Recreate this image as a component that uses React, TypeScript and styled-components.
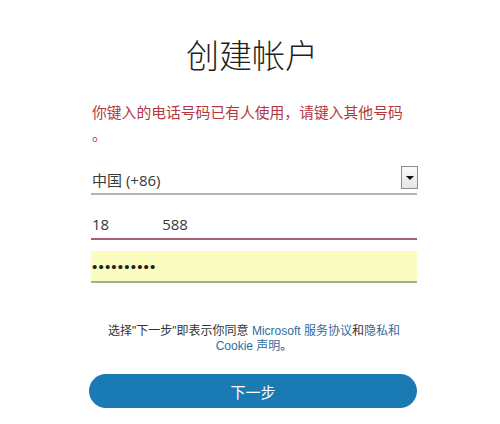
import React from "react";
import styled, { createGlobalStyle } from "styled-components";

const Global = createGlobalStyle`
  html, body { margin: 0; padding: 0; background: #ffffff; }
  body { font-family: "Open Sans", "Noto Sans CJK SC", sans-serif; }
  * { box-sizing: border-box; }
`;

const Page = styled.div`
  width: 500px;
  height: 424px;
  overflow: hidden;
  background: #fff;
`;

const Column = styled.main`
  width: 326px;
  margin-left: 91px;
  padding-top: 34px;
  display: flex;
  flex-direction: column;
`;

const Title = styled.h1`
  margin: 0 0 0 -4px;
  text-align: center;
  font-family: "Noto Sans CJK SC", sans-serif;
  font-weight: 300;
  font-size: 33px;
  line-height: 40px;
  color: #1e1e1e;
`;

const ErrorText = styled.p`
  margin: 27px 0 0 0;
  padding-left: 1px;
  font-family: "Noto Sans CJK SC", sans-serif;
  font-size: 14.8px;
  line-height: 22px;
  color: #b5373f;
  line-break: anywhere;
`;

const Field = styled.div<{ $border: string; $bg?: string; $mt: number; $h: number }>`
  margin-top: ${(p) => p.$mt}px;
  height: ${(p) => p.$h}px;
  display: flex;
  align-items: center;
  justify-content: space-between;
  padding-left: 1px;
  background: ${(p) => p.$bg || "transparent"};
  border-bottom: 2px solid ${(p) => p.$border};
`;

const FieldText = styled.span`
  font-family: "Open Sans", "Noto Sans CJK SC", sans-serif;
  font-size: 15px;
  color: #3a3a3a;
`;

const Gap = styled.span<{ $w: number }>`
  display: inline-block;
  width: ${(p) => p.$w}px;
`;

const DropButton = styled.span`
  width: 17px;
  height: 23px;
  margin-top: -3px;
  margin-right: -1px;
  border: 1px solid #8e8e8e;
  background: linear-gradient(#fafafa, #e6e6e6);
  display: flex;
  align-items: center;
  justify-content: center;
`;

const Triangle = styled.span`
  width: 0;
  height: 0;
  border-left: 4px solid transparent;
  border-right: 4px solid transparent;
  border-top: 4px solid #111;
`;

const Dots = styled.span`
  font-family: "Liberation Sans", sans-serif;
  font-size: 15px;
  letter-spacing: 1.2px;
  color: #222;
`;

const Terms = styled.p`
  margin: 41px 0 0 0;
  text-align: center;
  font-family: "Liberation Sans", "Noto Sans CJK SC", sans-serif;
  font-size: 12px;
  line-height: 15px;
  color: #333;
`;

const Link = styled.a`
  color: #2e6d9c;
  text-decoration: none;
`;

const NextButton = styled.button`
  margin-top: 20px;
  margin-left: -2px;
  width: 328px;
  height: 34px;
  border: none;
  border-radius: 17px;
  background: #1a7ab3;
  color: #fff;
  font-family: "Noto Sans CJK SC", sans-serif;
  font-size: 15px;
  cursor: pointer;
`;

export default function App() {
  return (
    <Page>
      <Global />
      <Column>
        <Title>创建帐户</Title>
        <ErrorText>你键入的电话号码已有人使用，请键入其他号码。</ErrorText>
        <Field $border="#b4b4b4" $mt={20} $h={30}>
          <FieldText>中国 (+86)</FieldText>
          <DropButton>
            <Triangle />
          </DropButton>
        </Field>
        <Field $border="#a9606c" $mt={14} $h={31}>
          <FieldText>
            18
            <Gap $w={53} />
            588
          </FieldText>
          <span />
        </Field>
        <Field $border="#a8ac94" $bg="#fafcc0" $mt={11} $h={32}>
          <Dots>••••••••••</Dots>
          <span />
        </Field>
        <Terms>
          选择"下一步"即表示你同意 <Link href="#">Microsoft 服务协议</Link>和<Link href="#">隐私和</Link>{" "}
          <Link href="#">Cookie 声明</Link>。
        </Terms>
        <NextButton>下一步</NextButton>
      </Column>
    </Page>
  );
}
